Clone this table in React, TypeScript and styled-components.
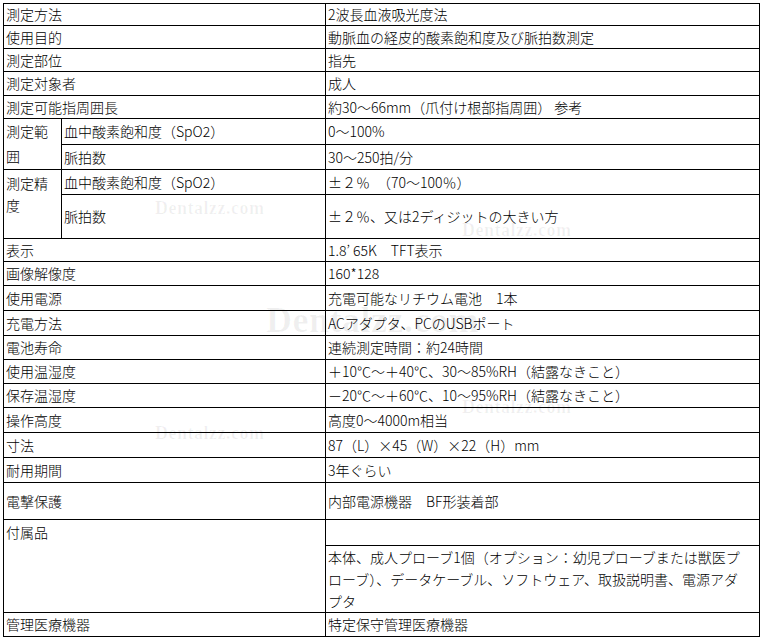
import { createGlobalStyle } from "styled-components";
import styled from "styled-components";

const GlobalStyle = createGlobalStyle`
  html, body {
    margin: 0;
    padding: 0;
    background: #fff;
  }
  body {
    font-family: "Noto Sans CJK JP", "Noto Sans", sans-serif;
    color: #000;
  }
`;

const Page = styled.div`
  position: relative;
  padding: 3px 0 0 3px;
  width: 760px;
`;

const Table = styled.table`
  border-collapse: collapse;
  table-layout: fixed;
  width: 756px;
  font-size: 14px;
  font-weight: 300;
`;

const Cell = styled.td<{ $h?: number; $top?: boolean; $lh?: number }>`
  border: 1px solid #000;
  padding: 0 1px 0 2px;
  height: ${({ $h }) => ($h ? `${$h - 1}px` : "auto")};
  line-height: ${({ $lh }) => ($lh ? `${$lh}px` : "19px")};
  vertical-align: ${({ $top }) => ($top ? "top" : "middle")};
  white-space: nowrap;
  overflow: hidden;
`;

const GroupCell = styled(Cell)<{ $pt?: number }>`
  padding-top: ${({ $pt }) => ($pt ? `${$pt}px` : "0")};
`;

const Watermark = styled.span<{ $x: number; $y: number; $size: number }>`
  position: absolute;
  left: ${({ $x }) => $x}px;
  top: ${({ $y }) => $y}px;
  font-family: "Liberation Serif", serif;
  font-weight: 700;
  font-size: ${({ $size }) => $size}px;
  line-height: 1;
  color: rgba(0, 0, 0, 0.06);
  pointer-events: none;
  white-space: nowrap;
  letter-spacing: 0.5px;
`;

const simpleTop: [string, string, number][] = [
  ["測定方法", "2波長血液吸光度法", 22],
  ["使用目的", "動脈血の経皮的酸素飽和度及び脈拍数測定", 23],
  ["測定部位", "指先", 23],
  ["測定対象者", "成人", 24],
  ["測定可能指周囲長", "約30〜66mm（爪付け根部指周囲） 参考", 23],
];

const simpleMid: [string, string, number][] = [
  ["表示", "1.8’ 65K　TFT表示", 23],
  ["画像解像度", "160*128", 24],
  ["使用電源", "充電可能なリチウム電池　1本", 25],
  ["充電方法", "ACアダプタ、PCのUSBポート", 25],
  ["電池寿命", "連続測定時間：約24時間", 24],
  ["使用温湿度", "＋10℃〜＋40℃、30〜85%RH（結露なきこと）", 24],
  ["保存温湿度", "－20℃〜＋60℃、10〜95%RH（結露なきこと）", 24],
  ["操作高度", "高度0〜4000m相当", 25],
  ["寸法", "87（L）×45（W）×22（H）mm", 25],
  ["耐用期間", "3年ぐらい", 25],
  ["電撃保護", "内部電源機器　BF形装着部", 37],
];

function SimpleRow({ label, value, h }: { label: string; value: string; h: number }) {
  return (
    <tr>
      <Cell colSpan={2} $h={h}>
        {label}
      </Cell>
      <Cell $h={h}>{value}</Cell>
    </tr>
  );
}

export default function App() {
  return (
    <Page>
      <GlobalStyle />
      <Table>
        <colgroup>
          <col style={{ width: 58 }} />
          <col style={{ width: 264 }} />
          <col style={{ width: 434 }} />
        </colgroup>
        <tbody>
          {simpleTop.map(([l, v, h]) => (
            <SimpleRow key={l} label={l} value={v} h={h} />
          ))}
          <tr>
            <GroupCell rowSpan={2} $lh={25}>
              測定範
              <br />
              囲
            </GroupCell>
            <Cell $h={25}>血中酸素飽和度（SpO2）</Cell>
            <Cell $h={25}>0〜100%</Cell>
          </tr>
          <tr>
            <Cell $h={24}>脈拍数</Cell>
            <Cell $h={24}>30〜250拍/分</Cell>
          </tr>
          <tr>
            <GroupCell rowSpan={2} $top $lh={22} $pt={2}>
              測定精
              <br />
              度
            </GroupCell>
            <Cell $h={25}>血中酸素飽和度（SpO2）</Cell>
            <Cell $h={25}>±２％　（70〜100％）</Cell>
          </tr>
          <tr>
            <Cell $h={44}>脈拍数</Cell>
            <Cell $h={44}>±２％、又は2ディジットの大きい方</Cell>
          </tr>
          {simpleMid.map(([l, v, h]) => (
            <SimpleRow key={l} label={l} value={v} h={h} />
          ))}
          <tr>
            <GroupCell colSpan={2} rowSpan={2} $top $pt={3}>
              付属品
            </GroupCell>
            <Cell $h={26}></Cell>
          </tr>
          <tr>
            <Cell $h={67} $lh={22}>
              本体、成人プローブ1個（オプション：幼児プローブまたは獣医プ
              <br />
              ローブ）、データケーブル、ソフトウェア、取扱説明書、電源アダ
              <br />
              プタ
            </Cell>
          </tr>
          <SimpleRow label="管理医療機器" value="特定保守管理医療機器" h={24} />
        </tbody>
      </Table>
      <Watermark $x={155} $y={199} $size={18}>Dentalzz.com</Watermark>
      <Watermark $x={462} $y={221} $size={18}>Dentalzz.com</Watermark>
      <Watermark $x={266} $y={302} $size={36}>Dentalzz.com</Watermark>
      <Watermark $x={462} $y={398} $size={18}>Dentalzz.com</Watermark>
      <Watermark $x={155} $y={424} $size={18}>Dentalzz.com</Watermark>
    </Page>
  );
}
